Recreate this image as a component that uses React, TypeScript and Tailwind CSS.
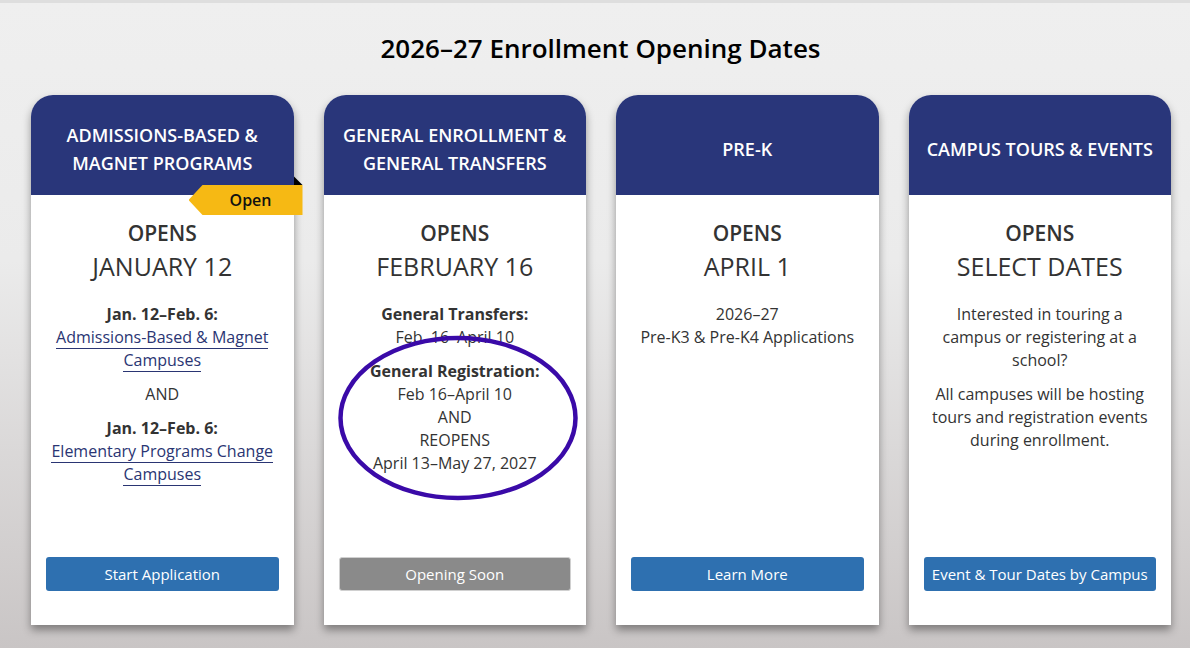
import React from "react";

const FONT = { fontFamily: '"Open Sans", "Noto Sans", Arial, sans-serif' };

function LinkText({ children }: { children: React.ReactNode }) {
  return (
    <span className="text-[#2a3573] border-b border-[#2a3573] [box-decoration-break:clone]">
      {children}
    </span>
  );
}

function Card({
  title,
  date,
  button,
  grey,
  children,
  overlay,
}: {
  title: React.ReactNode;
  date: string;
  button: string;
  grey?: boolean;
  children: React.ReactNode;
  overlay?: React.ReactNode;
}) {
  return (
    <div className="relative flex h-[530px] flex-col rounded-t-[22px] bg-white shadow-[0_5px_9px_rgba(0,0,0,0.38)]">
      <div className="flex h-[100px] items-center justify-center rounded-t-[22px] bg-[#29367a] px-2 pt-[8px] text-center text-[18px] font-semibold leading-[28px] text-white">
        {title}
      </div>
      <div className="flex flex-1 flex-col text-center text-[#333333]">
        <div className="pt-[21px]">
          <div className="text-[21px] font-semibold leading-[34px]">OPENS</div>
          <div className="text-[25px] font-medium leading-[32px]">{date}</div>
        </div>
        <div className="mt-[21px] px-[19px] text-[16px] leading-[23px]">{children}</div>
        <div className="mt-auto px-[15px] pb-[34px]">
          <div
            className={
              grey
                ? "flex h-[34px] items-center justify-center rounded-[3px] border border-[#d0d0d0] bg-[#8a8a8a] text-[15px] text-white"
                : "flex h-[34px] items-center justify-center rounded-[3px] bg-[#2e70b0] text-[15px] text-white"
            }
          >
            {button}
          </div>
        </div>
      </div>
      {overlay}
    </div>
  );
}

export default function App() {
  return (
    <div
      style={FONT}
      className="h-[648px] w-full overflow-hidden border-t-[3px] border-[#dedede] bg-gradient-to-b from-[#efefef] via-[#ebebeb] via-40% to-[#c9c5c5]"
    >
      <h1 className="pl-[11px] pt-[27px] text-center text-[26px] font-semibold leading-[36px] text-black">
        2026–27 Enrollment Opening Dates
      </h1>
      <div className="ml-[31px] mt-[29px] grid w-[1140px] grid-cols-4 gap-[30px]">
        <Card
          title={
            <span>
              ADMISSIONS-BASED &amp;
              <br />
              MAGNET PROGRAMS
            </span>
          }
          date="JANUARY 12"
          button="Start Application"
          overlay={
            <>
              <div className="absolute right-[-9px] top-[81px] h-[9px] w-[9px] bg-black [clip-path:polygon(0_0,100%_100%,0_100%)]" />
              <div className="absolute right-[-9px] top-[90px] flex h-[30px] w-[114px] items-center justify-center bg-[#f6b914] pl-[10px] text-[16px] font-semibold text-[#111] [clip-path:polygon(14px_0,100%_0,100%_100%,14px_100%,0_50%)]">
                Open
              </div>
            </>
          }
        >
          <p>
            <b className="font-bold">Jan. 12–Feb. 6:</b>
            <br />
            <LinkText>Admissions-Based &amp; Magnet Campuses</LinkText>
          </p>
          <p className="mt-[11px]">AND</p>
          <p className="mt-[11px]">
            <b className="font-bold">Jan. 12–Feb. 6:</b>
            <br />
            <LinkText>Elementary Programs Change Campuses</LinkText>
          </p>
        </Card>

        <Card
          title={
            <span>
              GENERAL ENROLLMENT &amp;
              <br />
              GENERAL TRANSFERS
            </span>
          }
          date="FEBRUARY 16"
          button="Opening Soon"
          grey
          overlay={
            <svg
              className="pointer-events-none absolute left-0 top-0"
              width="263"
              height="530"
              viewBox="0 0 263 530"
            >
              <ellipse
                cx="134"
                cy="323"
                rx="117.5"
                ry="80"
                fill="none"
                stroke="#3a0aa8"
                strokeWidth="4.5"
              />
            </svg>
          }
        >
          <p>
            <b className="font-bold">General Transfers:</b>
            <br />
            Feb. 16–April 10
          </p>
          <p className="mt-[11px]">
            <b className="font-bold">General Registration:</b>
            <br />
            Feb 16–April 10
            <br />
            AND
            <br />
            REOPENS
            <br />
            April 13–May 27, 2027
          </p>
        </Card>

        <Card title="PRE-K" date="APRIL 1" button="Learn More">
          <p>
            2026–27
            <br />
            Pre-K3 &amp; Pre-K4 Applications
          </p>
        </Card>

        <Card title="CAMPUS TOURS & EVENTS" date="SELECT DATES" button="Event & Tour Dates by Campus">
          <p>Interested in touring a campus or registering at a school?</p>
          <p className="mt-[11px]">All campuses will be hosting tours and registration events during enrollment.</p>
        </Card>
      </div>
    </div>
  );
}
